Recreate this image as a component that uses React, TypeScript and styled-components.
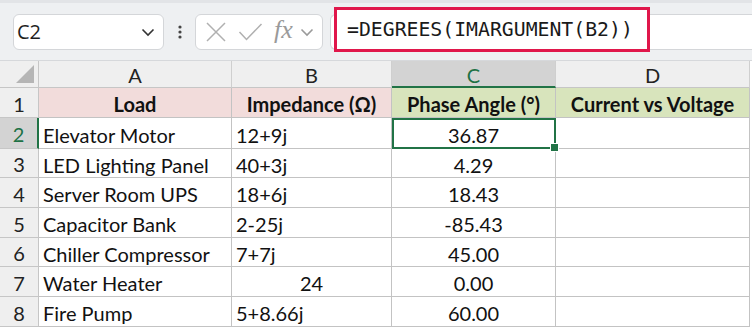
import React from "react";
import styled, { createGlobalStyle } from "styled-components";

const Global = createGlobalStyle`
  html, body { margin: 0; padding: 0; background: #fff; }
  body { width: 752px; height: 328px; overflow: hidden; font-family: Lato, "Noto Sans", sans-serif; }
`;

const Page = styled.div`
  width: 752px;
  height: 328px;
  display: flex;
  flex-direction: column;
  overflow: hidden;
`;

const Toolbar = styled.div`
  position: relative;
  height: 61px;
  box-sizing: border-box;
  background: #eef0f2;
  border-top: 3px solid #e2e4e7;
  border-bottom: 1px solid #d6d8db;
  display: flex;
  align-items: center;
  padding: 0 0 0 13px;
`;

const NameBox = styled.div`
  width: 151px;
  height: 36px;
  box-sizing: border-box;
  background: #fff;
  border: 1px solid #d4d6d9;
  border-radius: 6px;
  display: flex;
  align-items: center;
  justify-content: space-between;
  padding: 0 8px 0 3px;
  font-family: "Open Sans", "Noto Sans", sans-serif;
  font-size: 20px;
  color: #1f1f1f;
`;

const Dots = styled.div`
  width: 31px;
  display: flex;
  justify-content: center;
`;

const FxBox = styled.div`
  width: 128px;
  height: 36px;
  box-sizing: border-box;
  background: #fff;
  border: 1px solid #d4d6d9;
  border-radius: 6px;
  display: flex;
  align-items: center;
  padding: 0 0 0 9px;
  gap: 11px;
`;

const FxLabel = styled.span`
  font-family: "Liberation Serif", "DejaVu Serif", serif;
  font-style: italic;
  font-size: 26px;
  color: #9a9a9a;
  line-height: 1;
  margin-top: -3px;
`;

const FxChevron = styled.span`
  display: flex;
  margin-left: -4px;
`;

const FormulaField = styled.div`
  margin-left: 7px;
  flex: 1;
  height: 36px;
  box-sizing: border-box;
  background: #fff;
  border: 1px solid #d4d6d9;
  border-right: none;
  border-radius: 6px 0 0 6px;
`;

const Highlight = styled.div`
  position: absolute;
  left: 334px;
  top: 4px;
  width: 316px;
  height: 45px;
  box-sizing: border-box;
  border: 3px solid #e0174b;
  background: #fff;
  display: flex;
  align-items: center;
  padding-left: 10px;
  font-family: "DejaVu Sans Mono", monospace;
  font-size: 19.8px;
  color: #1a1a1a;
`;

const Grid = styled.div`
  display: grid;
  grid-template-columns: 39px 193px 160px 164px 194px;
  grid-template-rows: 27px 30px 31px 29px 30px 30px 29px 30px 30px;
`;

const ColHead = styled.div<{ $sel?: boolean }>`
  box-sizing: border-box;
  background: ${(p) => (p.$sel ? "#d3d3d3" : "#efefef")};
  border-right: 1px solid #cfcfcf;
  border-bottom: ${(p) => (p.$sel ? "2px solid #217346" : "1px solid #c6c6c6")};
  color: ${(p) => (p.$sel ? "#1e7145" : "#222")};
  font-size: 20px;
  display: flex;
  align-items: center;
  justify-content: center;
  padding-top: 2px;
`;

const Corner = styled.div`
  box-sizing: border-box;
  background: #efefef;
  border-right: 1px solid #c6c6c6;
  border-bottom: 1px solid #c6c6c6;
  display: flex;
  align-items: flex-end;
  justify-content: flex-end;
  padding: 0 4px 4px 0;
`;

const Tri = styled.div`
  width: 0;
  height: 0;
  border-left: 18px solid transparent;
  border-bottom: 18px solid #b5b5b5;
`;

const RowHead = styled.div<{ $sel?: boolean }>`
  box-sizing: border-box;
  background: ${(p) => (p.$sel ? "#d3d3d3" : "#efefef")};
  border-right: ${(p) => (p.$sel ? "2px solid #217346" : "1px solid #c6c6c6")};
  border-bottom: 1px solid #c6c6c6;
  color: ${(p) => (p.$sel ? "#1e7145" : "#222")};
  font-size: 20px;
  display: flex;
  align-items: center;
  justify-content: center;
  padding-top: 2px;
`;

const Cell = styled.div<{ $bg?: string; $align?: string; $bold?: boolean; $sel?: boolean }>`
  position: relative;
  box-sizing: border-box;
  background: ${(p) => p.$bg || "#fff"};
  border-right: 1px solid #c3c3c3;
  border-bottom: 1px solid #c3c3c3;
  display: flex;
  align-items: center;
  justify-content: ${(p) => p.$align || "flex-start"};
  padding: 3px 4px 0 4px;
  font-size: 20px;
  font-weight: ${(p) => (p.$bold ? 700 : 400)};
  color: #111;
  white-space: nowrap;
  ${(p) => (p.$sel ? "outline: 2px solid #217346; outline-offset: -2px; z-index: 2;" : "")}
`;

const Handle = styled.div`
  position: absolute;
  right: -4px;
  bottom: -4px;
  width: 7px;
  height: 7px;
  background: #217346;
  border: 1px solid #fff;
`;

const Chevron = ({ color = "#333" }: { color?: string }) => (
  <svg width="14" height="10" viewBox="0 0 14 10">
    <path d="M1.5 2.5 L7 8 L12.5 2.5" fill="none" stroke={color} strokeWidth="1.6" />
  </svg>
);

const pink = "#f2dcdb";
const green = "#d8e4bc";

const rows: [string, string, string, boolean?][] = [
  ["Elevator Motor", "12+9j", "36.87"],
  ["LED Lighting Panel", "40+3j", "4.29"],
  ["Server Room UPS", "18+6j", "18.43"],
  ["Capacitor Bank", "2-25j", "-85.43"],
  ["Chiller Compressor", "7+7j", "45.00"],
  ["Water Heater", "24", "0.00", true],
  ["Fire Pump", "5+8.66j", "60.00"],
];

export default function App() {
  return (
    <Page>
      <Global />
      <Toolbar>
        <NameBox>
          <span>C2</span>
          <Chevron />
        </NameBox>
        <Dots>
          <svg width="4" height="14" viewBox="0 0 4 14">
            <circle cx="2" cy="2" r="1.6" fill="#444" />
            <circle cx="2" cy="7" r="1.6" fill="#444" />
            <circle cx="2" cy="12" r="1.6" fill="#444" />
          </svg>
        </Dots>
        <FxBox>
          <svg width="22" height="22" viewBox="0 0 22 22">
            <path d="M2 2 L20 20 M20 2 L2 20" stroke="#b0b0b0" strokeWidth="1.5" fill="none" />
          </svg>
          <svg width="25" height="20" viewBox="0 0 25 20">
            <path d="M1.5 10 L8.5 17.5 L23.5 2" stroke="#b0b0b0" strokeWidth="1.5" fill="none" />
          </svg>
          <FxLabel>fx</FxLabel>
          <FxChevron>
            <Chevron color="#9a9a9a" />
          </FxChevron>
        </FxBox>
        <FormulaField />
        <Highlight>=DEGREES(IMARGUMENT(B2))</Highlight>
      </Toolbar>
      <Grid>
        <Corner>
          <Tri />
        </Corner>
        <ColHead>A</ColHead>
        <ColHead>B</ColHead>
        <ColHead $sel>C</ColHead>
        <ColHead>D</ColHead>

        <RowHead>1</RowHead>
        <Cell $bg={pink} $bold $align="center">Load</Cell>
        <Cell $bg={pink} $bold $align="center">Impedance (Ω)</Cell>
        <Cell $bg={green} $bold $align="center">Phase Angle (°)</Cell>
        <Cell $bg={green} $bold $align="center">Current vs Voltage</Cell>

        {rows.map(([a, b, c, center], i) => (
          <React.Fragment key={i}>
            <RowHead $sel={i === 0}>{i + 2}</RowHead>
            <Cell>{a}</Cell>
            <Cell $align={center ? "center" : "flex-start"}>{b}</Cell>
            <Cell $align="center" $sel={i === 0}>
              {c}
              {i === 0 && <Handle />}
            </Cell>
            <Cell />
          </React.Fragment>
        ))}
      </Grid>
    </Page>
  );
}
